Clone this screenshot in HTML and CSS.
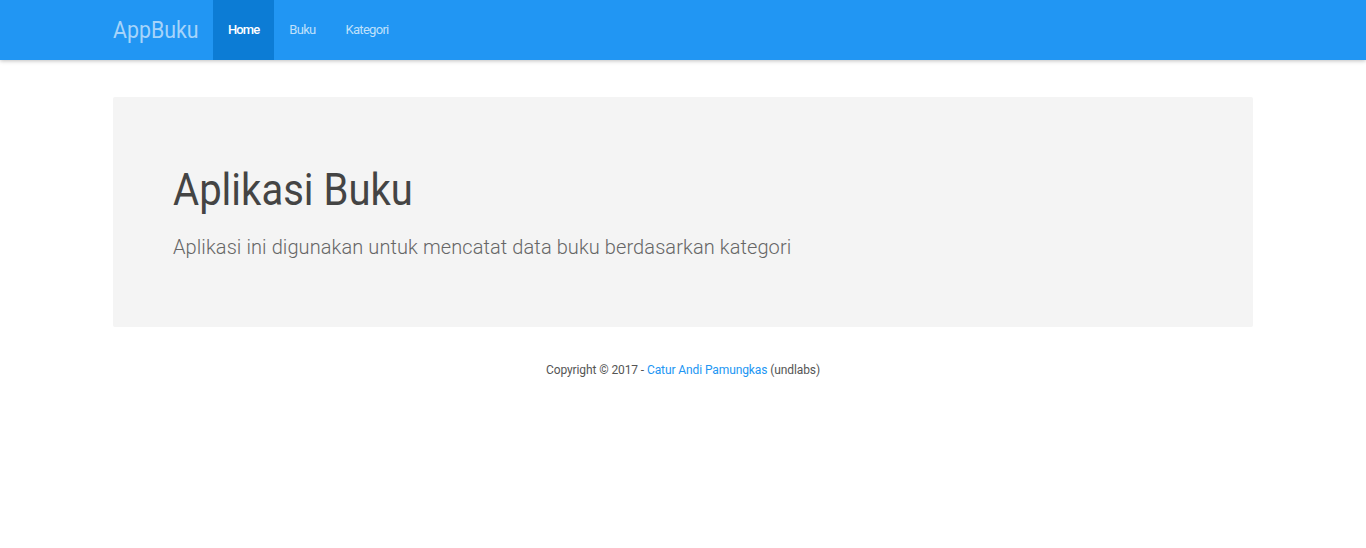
FILE: index.html
```html
<!DOCTYPE html>
<html lang="id">
<head>
<meta charset="utf-8">
<title>AppBuku</title>
<link rel="stylesheet" href="styles.css">
</head>
<body>
<nav class="navbar">
  <div class="container nav-inner">
    <a class="brand" href="#"><span class="narrow">AppBuku</span></a>
    <ul class="nav">
      <li class="active"><a href="#">Home</a></li>
      <li><a href="#">Buku</a></li>
      <li><a href="#">Kategori</a></li>
    </ul>
  </div>
</nav>
<main class="container">
  <section class="jumbotron">
    <h1><span class="narrow">Aplikasi Buku</span></h1>
    <p>Aplikasi ini digunakan untuk mencatat data buku berdasarkan kategori</p>
  </section>
  <footer class="footer">
    <p>Copyright © 2017 - <a href="#">Catur Andi Pamungkas</a> (undlabs)</p>
  </footer>
</main>
</body>
</html>
```
FILE: styles.css
```css
* { box-sizing: border-box; }
body {
  margin: 0;
  font-family: Roboto, "Helvetica Neue", Arial, sans-serif;
  font-size: 13px;
  line-height: 1.846;
  color: #666;
  background: #fff;
}
a { text-decoration: none; }
.container {
  width: 1140px;
  margin: 0 auto;
}
.narrow {
  display: inline-block;
  transform: scaleX(0.89);
  transform-origin: left center;
  white-space: nowrap;
}
.navbar {
  background: #2196f3;
  height: 60px;
  box-shadow: 0 1px 4px rgba(0,0,0,0.25);
}
.nav-inner {
  display: flex;
  align-items: stretch;
  height: 60px;
}
.brand {
  width: 100px;
  font-size: 24px;
  line-height: 60px;
  color: #a6d4fa;
}
.nav {
  display: flex;
  list-style: none;
  margin: 0;
  padding: 0;
}
.nav li a {
  display: block;
  padding: 0 15px;
  line-height: 60px;
  font-size: 13px;
  font-weight: 400;
  letter-spacing: -0.7px;
  color: #bfe0fb;
}
.nav li.active a {
  background: #0c7cd5;
  color: #fff;
  font-weight: 500;
  letter-spacing: -0.9px;
}
.jumbotron {
  margin-top: 37px;
  background: #f4f4f4;
  border-radius: 2px;
  padding: 68px 60px 60px;
  height: 230px;
}
.jumbotron h1 {
  margin: 0;
  font-size: 45px;
  font-weight: 400;
  line-height: 1.1;
  color: #444;
}
.jumbotron p {
  margin: 18px 0 0;
  font-size: 20px;
  font-weight: 300;
  line-height: 1.4;
  letter-spacing: 0.09px;
  color: #666;
}
.footer {
  text-align: center;
  padding-top: 32px;
}
.footer p { margin: 0; font-size: 12px; color: #555; letter-spacing: -0.1px; }
.footer a { color: #2196f3; }
```
